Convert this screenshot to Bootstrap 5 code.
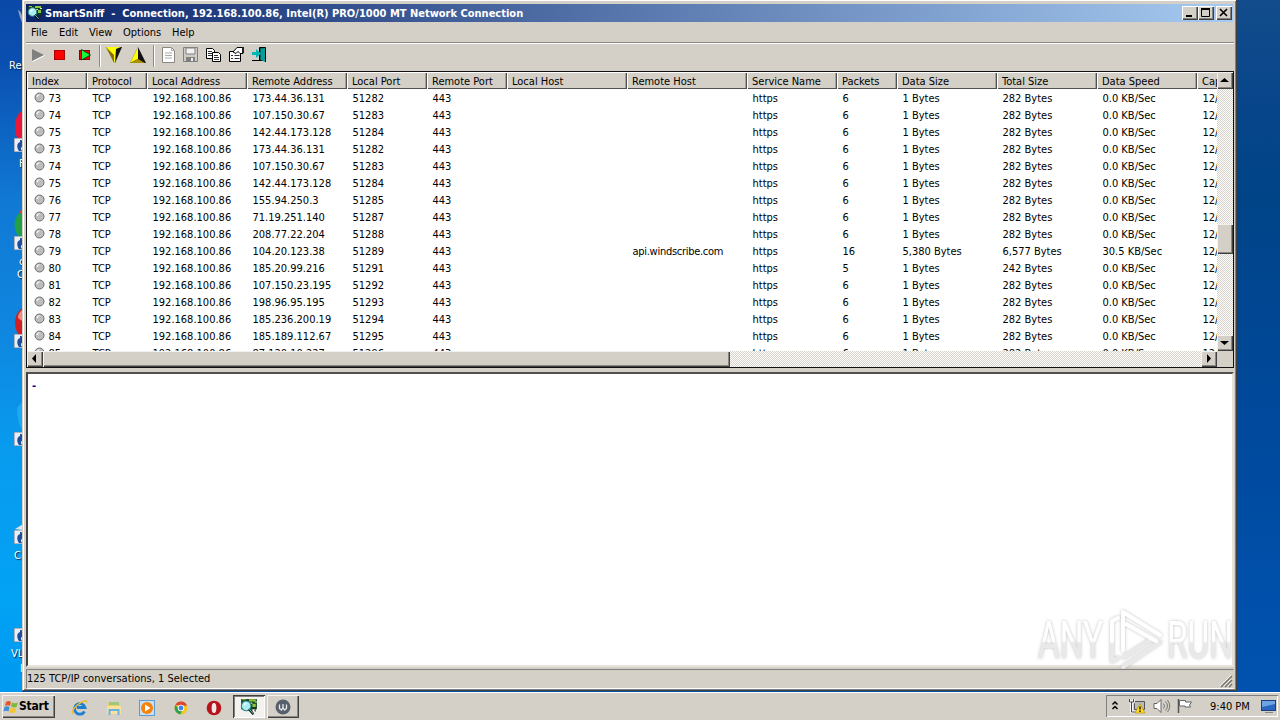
<!DOCTYPE html>
<html lang="en">
<head>
  <meta charset="UTF-8">
  <title>SmartSniff</title>
  <!-- Bootstrap CSS -->
  <link rel="stylesheet" href="https://cdn.jsdelivr.net/npm/bootstrap@5.3.0/dist/css/bootstrap.min.css">
  <style>
    body {
      width: 1280px;
      height: 720px;
      overflow: hidden;
      font-family: "DejaVu Sans Condensed", "DejaVu Sans", sans-serif;
      font-size: 11px;
      line-height: 17px;
      color: #000;
      background: #0050a8;
      white-space: nowrap;
    }
    svg { display: block; flex: none; }
    .desk-left {
      width: 22px;
      background: linear-gradient(#0a49a8 0, #0a4fb0 60px, #1079d4 200px, #0f86e0 330px, #089bee 450px, #02a2f5 600px, #0099ef 692px);
    }
    .desk-right {
      width: 43px;
      background: linear-gradient(#124c8c, #08458a 100px, #004488 200px, #00489a 400px, #0050ab 600px, #0052ae 692px);
    }
    .desk-art { position: absolute; left: 0; top: 0; }
    .desk-label {
      position: absolute;
      color: #fff;
      line-height: 12px;
      text-shadow: 1px 1px 1px #024;
    }

    /* main window */
    .app-window {
      width: 1215px;
      height: 691px;
      background: #d4d0c8;
      border-left: 1px solid #d4d0c8;
      border-right: 1px solid #404040;
      border-bottom: 1px solid #404040;
      padding: 3px 2px 0 3px;
      box-shadow: inset 1px 1px #fff, inset -1px -1px #808080;
    }
    .title-bar {
      height: 18px;
      margin: 1px 1px 0 0;
      padding: 0 1px 0 1px;
      color: #fff;
      font-weight: bold;
      background: linear-gradient(90deg, #0a246a, #a6caf0);
    }
    .win-btn {
      width: 16px;
      height: 14px;
      background: #d4d0c8;
      box-shadow: inset 1px 1px #fff, inset -1px -1px #404040, inset -2px -2px #808080;
    }
    .menu-line { height: 21px; padding-left: 5px; border-bottom: 1px solid #8c8982; }
    .menu-line span { display: block; line-height: 21px; }
    .tool-line { height: 28px; border-top: 1px solid #fff; padding: 2px 0 0 4px; }
    .tool-sep { width: 2px; height: 22px; margin-top: -1px; border-left: 1px solid #8c8982; border-right: 1px solid #fff; }

    /* conversation list */
    .list-pane { height: 297px; border: 1px solid #111; background: #fff; }
    .list-view { width: 1190px; height: 279px; overflow: hidden; }
    .head-cell {
      flex: none;
      height: 17px;
      padding-left: 5px;
      background: #d4d0c8;
      line-height: 19px;
      overflow: hidden;
      box-shadow: inset 1px 1px #fff, inset -1px -1px #505050, inset -2px 0 #a5a29b;
    }
    .line-cell { flex: none; height: 17px; padding-left: 5.5px; line-height: 17px; overflow: hidden; }
    .host-text { letter-spacing: -.28px; }
    .checker { background: repeating-conic-gradient(#d8d5cf 0 25%, #fcfbfa 0 50%) 0 0 / 2px 2px; }
    .raised {
      background: #d4d0c8;
      box-shadow: inset 1px 1px #f4f2ee, inset -1px -1px #404040, inset -2px -2px #8a8780;
    }
    .text-pane {
      height: 295px;
      margin-top: 4px;
      border: 2px solid #404040;
      border-top-color: #505050;
      border-right: 2px solid #e6e3dd;
      border-bottom: 2px solid #e6e3dd;
      background: #fff;
      padding: 3px 4px;
      color: #00008b;
      font-weight: bold;
    }
    .status-line {
      height: 20px;
      margin-top: 2px;
      border: 1px solid;
      border-color: #808080 #d4d0c8 #fff #808080;
      line-height: 18px;
    }

    /* taskbar */
    .task-bar { height: 28px; background: #d4d0c8; border-top: 1px solid #fff; padding: 2px 2px 0 2px; }
    .start-btn { width: 53px; height: 23px; font-weight: bold; font-size: 12px; letter-spacing: -.2px; }
    .task-btn { width: 32px; height: 23px; }
    .pressed-btn { background: #f4f2ee; box-shadow: inset 1px 1px #404040, inset -1px -1px #fff, inset 2px 2px #808080; }
    .tray { width: 172px; height: 22px; box-shadow: inset 1px 1px #808080, inset -1px -1px #fff; padding-left: 5px; }
    .logo-mark { position: absolute; left: 1030px; top: 600px; }
  </style>
</head>
<body>

<!-- shared symbols -->
<svg width="0" height="0" class="position-absolute">
  <symbol id="app" viewBox="0 0 16 16">
    <rect x="1" y="1" width="14" height="9" fill="#0b3d1a"/>
    <path d="M8 1h6v2H8zM11 5h3v3h-3zM2 1h3v1H2z" fill="#8ec63f"/>
    <path d="M9 4h2v1H9zM13 3h2v1h-2z" fill="#e8f0a0"/>
    <path d="M10 10h1v2h-1zM13 10h1v2h-1z" fill="#222"/>
    <circle cx="5.5" cy="7" r="4.3" fill="#a8eef0" stroke="#2b7f8e"/>
    <path d="M3.5 6.5l2-2" stroke="#fff" stroke-width="1.4"/>
    <path d="M8 10l4 4.5" stroke="#000" stroke-width="2"/>
    <path d="M8.3 10l3.5 4" stroke="#7fd" stroke-width=".8"/>
  </symbol>
  <symbol id="ball" viewBox="0 0 11 11">
    <circle cx="5.5" cy="5.5" r="4.5" fill="#bdbdbd" stroke="#6b6b6b"/>
    <path d="M3 5a3 3 0 0 1 2.500-2.300" stroke="#f4f4f4" stroke-width="1.3" fill="none"/>
  </symbol>
  <symbol id="shortcut" viewBox="0 0 14 14">
    <rect width="14" height="14" fill="#e9eef4" stroke="#6f7f90"/>
    <path d="M5 13C1.500 8 4 4.500 6 4V2l7 1-2 7-2-1.500C6.500 9 6.500 11 8 13z" fill="#1b4e9c"/>
  </symbol>
</svg>

<div class="d-flex" style="height: 692px">
  <div class="desk-left"></div>

  <div class="app-window">
    <div class="title-bar d-flex align-items-center">
      <svg width="16" height="16"><use href="#app"/></svg>
      <span style="margin-left: 2px">SmartSniff&nbsp; -&nbsp; Connection, 192.168.100.86, Intel(R) PRO/1000 MT Network Connection</span>
      <div class="d-flex ms-auto">
        <div class="win-btn"><svg width="16" height="14"><path d="M4 9h6v2H4z"/></svg></div>
        <div class="win-btn"><svg width="16" height="14"><path d="M3.5 3v7.500h8V3" fill="none" stroke="#000"/><path d="M3 2h9v2H3z"/></svg></div>
        <div class="win-btn" style="margin-left: 2px"><svg width="16" height="14"><path d="M4 3l7 7M11 3l-7 7" stroke="#000" stroke-width="1.6"/></svg></div>
      </div>
    </div>

    <div class="menu-line d-flex">
      <span style="width: 28px">File</span>
      <span style="width: 30px">Edit</span>
      <span style="width: 34px">View</span>
      <span style="width: 49px">Options</span>
      <span>Help</span>
    </div>

    <div class="tool-line d-flex">
      <svg width="22" height="18"><path d="M2 3l12 6L2 15z" fill="#808080"/><path d="M2.500 15.500L14.500 9.500" stroke="#fff"/></svg>
      <svg width="25" height="18"><rect x="2.500" y="4.500" width="10" height="9" fill="#f00" stroke="#a00"/></svg>
      <svg width="22" height="18"><rect x="2.500" y="4.500" width="10" height="9" fill="#e00" stroke="#800"/><path d="M4.500 3.500l9 5.500-9 5z" fill="#1f3" stroke="#043"/></svg>
      <div class="tool-sep"></div>
      <svg width="25" height="18" style="margin-left: 4px"><path d="M1 1h16L10 17z" fill="#111"/><path d="M1 1h15l-5 2-1 14z" fill="#ff0"/><path d="M1 1l2 4 6 12V9z" fill="#886f00"/></svg>
      <svg width="23" height="18"><path d="M0 17L8 1l8 16z" fill="#111"/><path d="M0 17L8 1v12z" fill="#ff0"/><path d="M0 17l8-4 7 4z" fill="#aa9200"/></svg>
      <div class="tool-sep"></div>
      <svg width="21" height="18" style="margin-left: 6px"><path d="M1.500 1.500h9l3 3v12h-12z" fill="#fff" stroke="#8a8780"/><path d="M10.500 1.500v3h3M4 7h7M4 9.500h7M4 12h7" fill="none" stroke="#aaa"/></svg>
      <svg width="23" height="18"><path d="M1.500 1.500h14v14h-14z" fill="#cfccc5" stroke="#808080"/><path d="M4 2h9v6H4z" fill="#f2f2f2" stroke="#808080"/><path d="M4 11h9v4H4z" fill="#808080"/><path d="M9 12h2v3H9z" fill="#eee"/></svg>
      <svg width="23" height="18"><path d="M1.500 2.500h6l2 2v8h-8z" fill="#fff" stroke="#000"/><path d="M3 5.500h4M3 7.500h4M3 9.500h4" stroke="#333"/><path d="M7.500 6.500h6l2 2v7h-8z" fill="#fff" stroke="#000"/><path d="M9 9.500h4M9 11.500h5M9 13.500h5" stroke="#333"/></svg>
      <svg width="23" height="18"><path d="M1.500 5.500h11v10h-11z" fill="#fff" stroke="#000"/><path d="M3 9.500h2M6.500 9.500h5M3 12.500h2M6.500 12.500h5" stroke="#333"/><path d="M5 6l4-4.500h6v6h-3l-2-2-2 2z" fill="#fff" stroke="#000"/><path d="M14 1h2v6h-2z" fill="#222"/></svg>
      <svg width="23" height="18"><path d="M8.500 1.500h6v13h-6z" fill="#066" stroke="#000"/><path d="M10 3l4-1v14l-4-2z" fill="#0a9c98"/><path d="M14.500 2v14M1 14.500h8" stroke="#000"/><path d="M1 6h4V3l5 4.500L5 12V9H1z" fill="#00b9b4"/></svg>
    </div>

    <div class="list-pane">
      <div class="d-flex">
        <div class="list-view">
          <div class="d-flex" id="headRow"></div>
          <div style="height: 1px"></div>
          <div id="listRows"></div>
        </div>
        <div class="d-flex flex-column checker" style="width: 16px; height: 279px">
          <div class="raised" style="height: 17px"><svg width="16" height="16"><path d="M3 10h9L7.500 6z"/></svg></div>
          <div class="raised" style="height: 30px; margin-top: 135px"></div>
          <div class="raised mt-auto" style="height: 16px"><svg width="16" height="16"><path d="M3 6h9l-4.500 4z"/></svg></div>
        </div>
      </div>
      <div class="d-flex">
        <div class="d-flex checker" style="width: 1190px; height: 16px">
          <div class="raised" style="width: 16px"><svg width="16" height="16"><path d="M9 3v9L5 7.500z"/></svg></div>
          <div class="raised" style="width: 687px"></div>
          <div class="raised ms-auto" style="width: 16px"><svg width="16" height="16"><path d="M6 3v9l4-4.500z"/></svg></div>
        </div>
        <div style="width: 16px; height: 16px; background: #d4d0c8"></div>
      </div>
    </div>

    <div class="text-pane">-</div>

    <div class="status-line d-flex justify-content-between">
      <span>125 TCP/IP conversations, 1 Selected</span>
      <svg width="13" height="18"><path d="M1 17L12 6M5 17l7-7M9 17l3-3" stroke="#77746e" stroke-width="1.5"/><path d="M0 16L11 5M4 16l7-7M8 16l3-3" stroke="#fff" stroke-width=".8"/></svg>
    </div>
  </div>

  <div class="desk-right"></div>
</div>

<div class="task-bar d-flex">
  <div class="start-btn raised d-flex align-items-center">
    <svg width="17" height="18"><path d="M4 4q3-2 5 0L8 8Q6 6.500 3 8z" fill="#e4572a"/><path d="M10 4.500q3 1.500 6 0L14.500 9q-3 1-5.500-.5z" fill="#7dba3c"/><path d="M2.500 9Q5 7.500 7.500 9L6.500 13.500q-2.500-1.500-5 0z" fill="#3f8fd8"/><path d="M8.500 9.500q3 1.500 5.700.5L13 14.500q-3 1-5.500-.5z" fill="#f6c430"/></svg>
    <span>Start</span>
  </div>
  <div class="d-flex align-items-center" style="width: 178px; padding-left: 17px; gap: 17.500px">
    <svg width="16" height="18" viewBox="0 0 16 18" overflow="visible"><path d="M12.500 12.500A5.300 5.300 0 1 1 13 8.500H5" fill="none" stroke="#1c7fd0" stroke-width="2.800"/><path d="M1 15Q-1 11 6 5.500T15.500 3" fill="none" stroke="#f0b92c" stroke-width="1.400"/></svg>
    <svg width="16" height="18" viewBox="0 0 16 18"><path d="M1 4l5-1 1 1.500h7V14H1z" fill="#edcf6d"/><path d="M3 3h10v3H3z" fill="#9cc978"/><path d="M1 7h14v8H1z" fill="#f6e39b"/><path d="M3.500 16v-5h9v5" fill="none" stroke="#6bb0df" stroke-width="2"/></svg>
    <svg width="16" height="18" viewBox="0 0 16 18"><rect x=".5" y="1.500" width="15" height="15" fill="#c9dff2" stroke="#5c9bd0"/><circle cx="8" cy="9" r="6" fill="#f4820c"/><path d="M6 5.500l5.500 3.500L6 12.500z" fill="#fff"/></svg>
    <svg width="16" height="18" viewBox="0 0 16 18"><circle cx="8" cy="9" r="6.500" fill="#f5c71c"/><path d="M2.300 6A6.500 6.500 0 0 1 14 6.500L8 7z" fill="#dd4535"/><path d="M2.300 6a6.500 6.500 0 0 0 5 9.400L9.500 11 5 9z" fill="#2fa04f"/><circle cx="8" cy="9" r="3.200" fill="#fff"/><circle cx="8" cy="9" r="2.400" fill="#3f83ea"/></svg>
    <svg width="16" height="18" viewBox="0 0 16 18"><circle cx="8" cy="9" r="7.300" fill="#b5141b"/><ellipse cx="8" cy="9" rx="2.400" ry="5" fill="#f3e6e6"/></svg>
  </div>
  <div class="task-btn pressed-btn d-flex align-items-center justify-content-center"><svg width="18" height="18"><use href="#app"/></svg></div>
  <div class="task-btn raised d-flex align-items-center justify-content-center" style="margin-left: 2px">
    <svg width="16" height="16"><circle cx="8" cy="8" r="7.500" fill="#56606c"/><path d="M4.500 5.500v4l2 1.500L8 8.500l1.500 2.500 2-1.500v-4M8 5v4" fill="none" stroke="#e8eaec" stroke-width="1.300"/></svg>
  </div>
  <div class="tray d-flex align-items-center ms-auto">
    <svg width="8" height="14" style="margin-right: 10px"><path d="M1.500 5.500L4 3l2.500 2.500M1.500 10L4 7.500l2.500 2.500" fill="none" stroke="#000" stroke-width="1.500"/></svg>
    <svg width="24" height="18"><path d="M5.500 4.500h10v8h-10z" fill="#bbb" stroke="#555"/><path d="M8 15h6" stroke="#555" stroke-width="2"/><path d="M.5 2v3h4V2M2.500 5v10h4" fill="none" stroke="#fff" stroke-width="2.500"/><path d="M.5 2v3h4V2M2.500 5v10h4" fill="none" stroke="#444"/><path d="M11 6.500L16 16H6z" fill="#ffd91f" stroke="#a8890a" stroke-width=".6"/><path d="M11 9.500v3M11 13.500V15" stroke="#000" stroke-width="1.300"/></svg>
    <svg width="24" height="18"><path d="M1 6.500h3l4-4v13l-4-4H1z" fill="#fff" stroke="#666"/><path d="M10.500 6.500q2 2.500 0 5M12.500 4.500q4 4.500 0 9M14.500 3q4.500 6 0 12" fill="none" stroke="#777"/></svg>
    <svg width="33" height="18"><path d="M1.500 2v14" stroke="#555" stroke-width="1.500"/><path d="M2.500 3.500h6v1.500h6l-2 3 1 2H8V9H2.500z" fill="#fff" stroke="#666"/></svg>
    <span style="padding-top: 1px">9:40 PM</span>
    <svg width="17" height="16" style="margin-left: 11px"><rect x=".5" y="2.500" width="14" height="10" fill="#2a66bd" stroke="#17407f"/><path d="M1 3h13v3L1 9z" fill="#6ca4e4"/><path d="M4 14.500h8" stroke="#888"/></svg>
  </div>
</div>

<!-- desktop icons, mostly hidden behind the window -->
<svg class="desk-art" width="22" height="692">
  <path d="M18 10q5 2 5 14-3-5-5-14z" fill="#93a5bd"/>
  <ellipse cx="25" cy="127" rx="10" ry="17" fill="#e9173a"/>
  <circle cx="32" cy="225" r="17.5" fill="#22a046"/>
  <path d="M19 212q4-4 8-4v10z" fill="#e3422b"/>
  <ellipse cx="29" cy="323" rx="14" ry="17" fill="#cf1f22"/>
  <path d="M18 318q0-5 4-8v11z" fill="#ef8c80"/>
  <path d="M17 408l5-6v28q-5-8-5-22z" fill="#1fa9f2"/>
  <path d="M15 529l8-5v6z" fill="#dfe4ea"/>
  <use href="#shortcut" x="14" y="138" width="14" height="14"/>
  <use href="#shortcut" x="14" y="236" width="14" height="14"/>
  <use href="#shortcut" x="14" y="334" width="14" height="14"/>
  <use href="#shortcut" x="14" y="432" width="14" height="14"/>
  <use href="#shortcut" x="14" y="530" width="14" height="14"/>
  <use href="#shortcut" x="14" y="628" width="14" height="14"/>
</svg>
<div class="desk-label" style="left: 9px; top: 60px">Re</div>
<div class="desk-label overflow-hidden" style="left: 19px; top: 158px; width: 3px">F</div>
<div class="desk-label overflow-hidden" style="left: 19px; top: 256px; width: 3px">c</div>
<div class="desk-label overflow-hidden" style="left: 17px; top: 269px; width: 5px">C</div>
<div class="desk-label overflow-hidden" style="left: 14px; top: 550px; width: 8px">C</div>
<div class="desk-label overflow-hidden" style="left: 11px; top: 648px; width: 11px">VL</div>
<div class="desk-label overflow-hidden" style="left: 20px; top: 663px; width: 2px">l</div>

<!-- watermark -->
<svg class="logo-mark" width="206" height="80">
  <defs>
    <linearGradient id="fade" x1="0" y1="0" x2="0" y2="1"><stop offset=".5" stop-color="#fff"/><stop offset=".55" stop-color="#e9e9e9"/></linearGradient>
    <filter id="glow" x="-10%" y="-10%" width="120%" height="120%"><feDropShadow dx="0" dy="0" stdDeviation="1.7" flood-color="#777" flood-opacity=".5"/></filter>
  </defs>
  <g filter="url(#glow)" fill="url(#fade)" font-family="Roboto" font-size="51">
    <text x="8" y="58" textLength="65" lengthAdjust="spacingAndGlyphs">ANY</text>
    <text x="137" y="58" textLength="66" lengthAdjust="spacingAndGlyphs">RUN</text>
    <g fill="none" stroke-width="4" stroke-linejoin="round" stroke-linecap="round">
      <path d="M93 67l37-25M94 57l26-17M82 40v21l6-3" stroke="#e9e9e9"/>
      <path d="M88 18l-6 3v20M93 50V12l37 23M96 24l30 17" stroke="#fff"/>
    </g>
  </g>
</svg>

<!-- Bootstrap JS -->
<script src="https://cdn.jsdelivr.net/npm/bootstrap@5.3.0/dist/js/bootstrap.bundle.min.js"></script>

<script>
  // Columns: title and width in px
  const columns = [
    ['Index', 60], ['Protocol', 60], ['Local Address', 100], ['Remote Address', 100],
    ['Local Port', 80], ['Remote Port', 80], ['Local Host', 120], ['Remote Host', 120],
    ['Service Name', 90], ['Packets', 60], ['Data Size', 100], ['Total Size', 100],
    ['Data Speed', 100], ['Capture Time', 100]
  ];

  // index, remote address, local port, then optional: host, packets, data, total, speed
  const conversations = [
    [73, '173.44.36.131', 51282],
    [74, '107.150.30.67', 51283],
    [75, '142.44.173.128', 51284],
    [73, '173.44.36.131', 51282],
    [74, '107.150.30.67', 51283],
    [75, '142.44.173.128', 51284],
    [76, '155.94.250.3', 51285],
    [77, '71.19.251.140', 51287],
    [78, '208.77.22.204', 51288],
    [79, '104.20.123.38', 51289, 'api.windscribe.com', 16, '5,380', '6,577', '30.5'],
    [80, '185.20.99.216', 51291, '', 5, '1', '242'],
    [81, '107.150.23.195', 51292],
    [82, '198.96.95.195', 51293],
    [83, '185.236.200.19', 51294],
    [84, '185.189.112.67', 51295],
    [85, '87.120.10.227', 51296]
  ];

  const headRow = document.getElementById('headRow');
  const listRows = document.getElementById('listRows');

  columns.forEach(([title, width]) => {
    headRow.innerHTML += `<div class="head-cell" style="width: ${width}px">${title}</div>`;
  });

  conversations.forEach(([index, remote, port, host = '', packets = 6, data = '1', total = '282', speed = '0.0']) => {
    const ball = '<svg width="11" height="11" style="margin: 2px 4px 0 1px"><use href="#ball"/></svg>';
    const cells = [
      `<div class="d-flex">${ball}<span>${index}</span></div>`, 'TCP', '192.168.100.86', remote, port, 443, '',
      `<span class="host-text">${host}</span>`,
      'https', packets, data + ' Bytes', total + ' Bytes', speed + ' KB/Sec', '12/20/2019'
    ];
    let html = '<div class="d-flex">';
    cells.forEach((text, i) => {
      html += `<div class="line-cell" style="width: ${columns[i][1]}px">${text}</div>`;
    });
    listRows.innerHTML += html + '</div>';
  });
</script>
</body>
</html>
